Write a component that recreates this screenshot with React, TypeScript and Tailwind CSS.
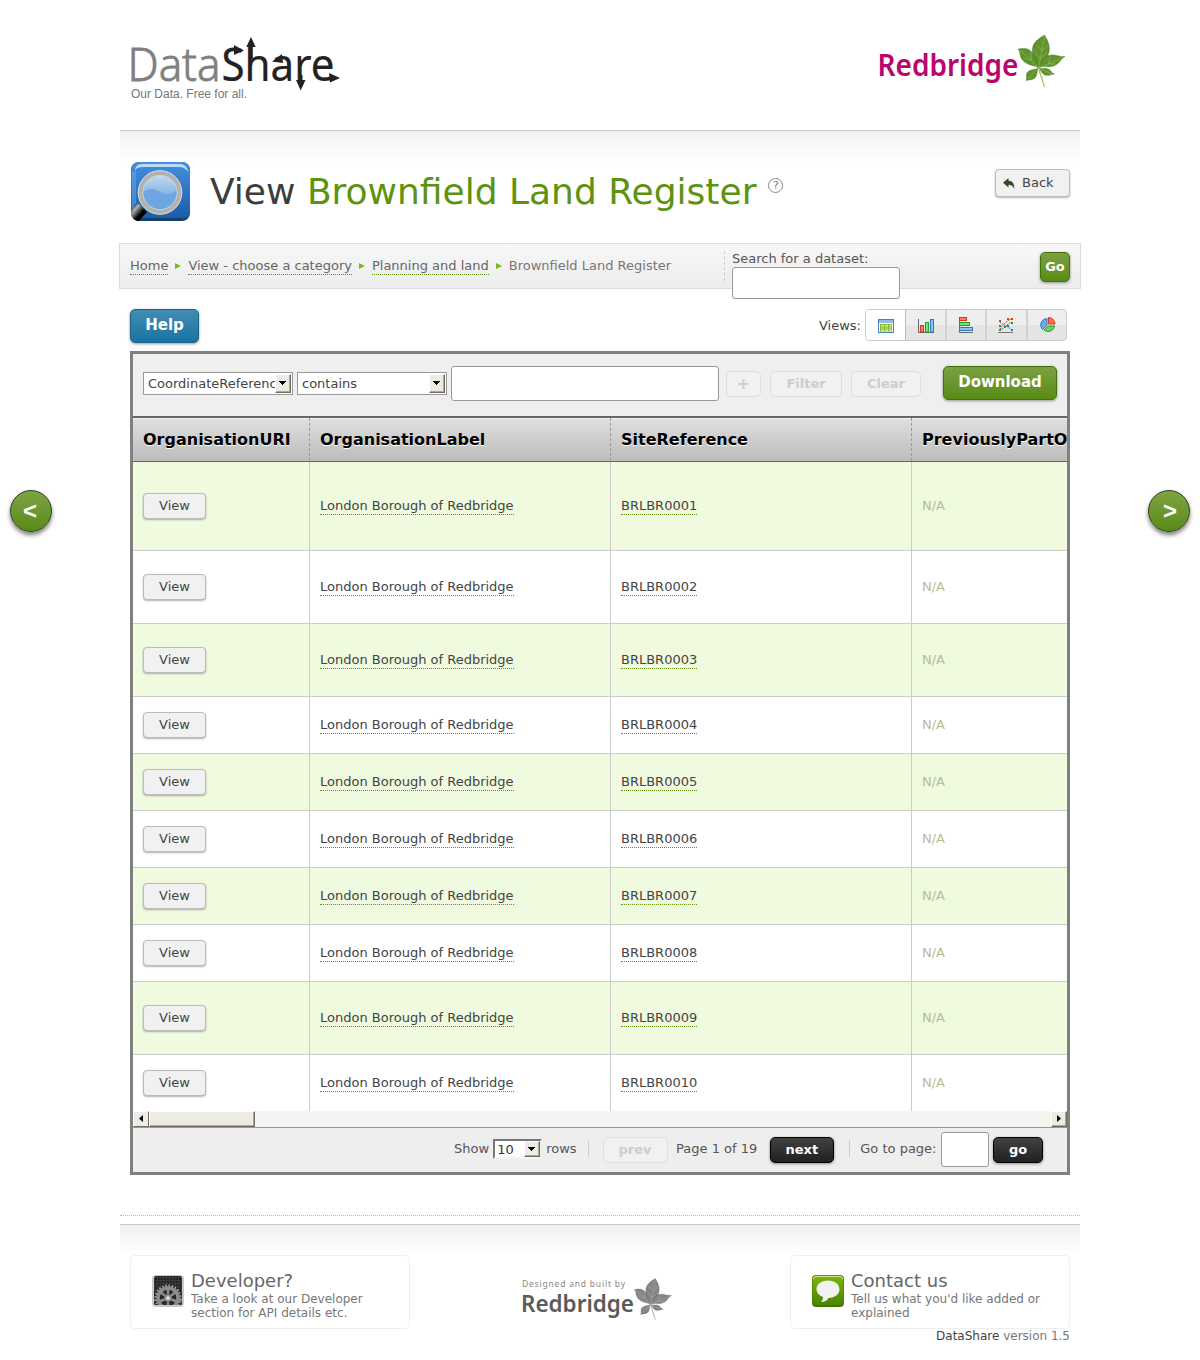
import React from "react";

const rows = [
  { ref: "BRLBR0001", h: "h-[89px]" },
  { ref: "BRLBR0002", h: "h-[73px]" },
  { ref: "BRLBR0003", h: "h-[73px]" },
  { ref: "BRLBR0004", h: "h-[57px]" },
  { ref: "BRLBR0005", h: "h-[57px]" },
  { ref: "BRLBR0006", h: "h-[57px]" },
  { ref: "BRLBR0007", h: "h-[57px]" },
  { ref: "BRLBR0008", h: "h-[57px]" },
  { ref: "BRLBR0009", h: "h-[73px]" },
  { ref: "BRLBR0010", h: "h-[57px]" },
];

const link = "mt-px border-b border-dotted border-[#5c9310] pb-px leading-[15px]";

function DataShareLogo() {
  return (
    <svg width="220" height="72" viewBox="-4 0 220 72" className="-ml-1 block overflow-visible">
      <g fontFamily="'Noto Sans', sans-serif" fontSize="45">
        <text x="-2.500" y="46" textLength="93" lengthAdjust="spacingAndGlyphs" fill="#808080" fontWeight="300" stroke="#808080" strokeWidth="0.8">Data</text>
        <text x="91.500" y="46" textLength="113" lengthAdjust="spacingAndGlyphs" fill="#222" fontWeight="400" stroke="#222" strokeWidth="0.2">Share</text>
      </g>
      <g fill="#222">
        <path d="M121 2 L125.7 12 H116.3 Z" />
        <path d="M119.2 10 H122.8 V24 H119.2 Z" />
        <path d="M104 10 L114 15.5 L104 20 Z" />
        <path d="M142 26.5 L152 19 L153 28 Z" />
        <path d="M169 40 H172.5 V48 H169 Z M166 45 H175.5 L170.7 55.5 Z" />
        <path d="M199 38 L210 43 L200 47.5 Z" />
      </g>
      <text x="1" y="63" fontFamily="'Liberation Sans', sans-serif" fontSize="12" textLength="116" fill="#777">Our Data. Free for all.</text>
    </svg>
  );
}

function Leaf({ a, b, c }: { a: string; b: string; c: string }) {
  return (
    <g>
      <g fill={a} stroke={b} strokeWidth="0.4">
        <path d="M21 33 C19 28 13 20 15.500 11 C17.500 6 22 3 27 0 C29 4 33 9 31.500 17 C29.500 25 23 27 21 33Z" />
        <path d="M21 33 C18 30 10 31 5 25 C1.500 21 3.500 17 0.500 14 C6 13 12 12.500 15.500 19 C18 24 18 29 21 33Z" />
        <path d="M21 33 C24 29 25 23 31 20.500 C37 18.500 41 22 47.500 21.500 C43 24 42 29 36 31 C30 33 26 30 21 33Z" />
        <path d="M21 33 C18 35 12 34 9.500 38 C8 41 10 42 8.500 45.500 C12 44.500 16 45.500 18.500 41.500 C20 38.500 19 36 21 33Z" />
        <path d="M21 33 C25 34.500 28 32.500 31.500 34.500 C34 36 34 38 37 39 C33 39.500 30 41.500 26.500 39.500 C23.500 37.500 23.500 35 21 33Z" />
      </g>
      <path d="M21 33 Q24 16 27 1 M21 33 Q12 22 2 15 M21 33 Q34 28 46 22 M21 33 L10 44 M21 33 L35 39 M23 24 L17.500 17 M23 24 L29.500 17 M25 16 L19 10 M25 16 L31 10 M14 25 L13 17 M14 25 L6 23 M31 29 L33 22 M31 29 L38 29" stroke={c} strokeWidth="0.500" fill="none" />
      <path d="M21 33 L27 52" stroke={c} strokeWidth="1.300" fill="none" />
    </g>
  );
}

function RedbridgeLogo() {
  return (
    <svg width="190" height="58" viewBox="0 0 190 58" className="block overflow-visible">
      <text x="1.500" y="41" fontFamily="'Noto Sans', sans-serif" fontWeight="600" fontSize="30" textLength="141" lengthAdjust="spacingAndGlyphs" fill="#b8066c">Redbridge</text>
      <g transform="translate(141.500 0)"><Leaf a="#5f942b" b="#35661c" c="#a9c56c" /></g>
    </svg>
  );
}

function FooterLogo() {
  return (
    <svg width="152" height="46" viewBox="0 0 152 46" className="block overflow-visible">
      <text x="0" y="10.500" fontFamily="'Noto Sans', sans-serif" fontSize="8.500" textLength="103" fill="#888">Designed and built by</text>
      <text x="-1" y="35.500" fontFamily="'Noto Sans', sans-serif" fontWeight="600" fontSize="24" textLength="113" lengthAdjust="spacingAndGlyphs" fill="#5b5b5b">Redbridge</text>
      <g transform="translate(112 2.500) scale(0.790)"><Leaf a="#858585" b="#555" c="#b5b5b5" /></g>
    </svg>
  );
}

function Magnifier() {
  return (
    <svg width="60" height="60" viewBox="0 0 60 60" className="block">
      <defs>
        <linearGradient id="mbg" x1="0" y1="0" x2="0" y2="1"><stop offset="0" stopColor="#4490e2" /><stop offset="1" stopColor="#1c5ca6" /></linearGradient>
        <linearGradient id="mlens" x1="0" y1="0" x2="0" y2="1"><stop offset="0" stopColor="#c4dcf4" /><stop offset="0.500" stopColor="#8db8e6" /><stop offset="1" stopColor="#8fbdf0" /></linearGradient>
        <linearGradient id="mhandle" x1="0" y1="0" x2="1" y2="1"><stop offset="0" stopColor="#222" /><stop offset="0.35" stopColor="#999" /><stop offset="0.6" stopColor="#000" /></linearGradient>
        <clipPath id="mclip"><rect x="1" width="59" height="59" rx="8" /></clipPath>
      </defs>
      <g clipPath="url(#mclip)">
        <rect x="1" width="59" height="59" fill="#14406f" />
        <rect x="1" width="59" height="56" rx="6" fill="url(#mbg)" />
        <path d="M5 9 Q5 2 12 2 H50 Q57 2 58 10 Q55 5 49 5 H13 Q6 5 5 9Z" fill="#bcd9f7" />
        <path d="M3 10 V46 M5 9 V42" stroke="#6aaaec" strokeWidth="1" />
        <path d="M8 41 L17 50 L8 60 H0 V49Z" fill="url(#mhandle)" />
        <path d="M9 43 L3 49" stroke="#aaa" strokeWidth="2" />
        <circle cx="30" cy="30.500" r="18" fill="url(#mlens)" />
        <path d="M13 30 C20 25 25 27 30 30 C36 33.500 41 33 47 28 A17 17 0 0 1 13 33Z" fill="#6ea6e2" />
        <circle cx="30" cy="30.500" r="19.500" fill="none" stroke="#b1b1b1" strokeWidth="5" />
        <circle cx="30" cy="30.500" r="21.800" fill="none" stroke="#ddd" strokeWidth="1" />
        <circle cx="30" cy="30.500" r="17.200" fill="none" stroke="#d5d5d5" strokeWidth="0.8" />
      </g>
    </svg>
  );
}

function DeveloperIcon() {
  return (
    <svg width="32" height="32" viewBox="0 0 32 32" className="block">
      <defs>
        <clipPath id="dclip"><rect x="2" y="1" width="28" height="29" rx="2" /></clipPath>
        <pattern id="ddots" width="3" height="3" patternUnits="userSpaceOnUse"><rect width="3" height="3" fill="#3a3a3a" /><circle cx="1" cy="1" r="0.9" fill="#181818" /></pattern>
      </defs>
      <rect width="32" height="32" rx="4" fill="#c9c9c9" />
      <g clipPath="url(#dclip)">
        <rect width="32" height="32" fill="url(#ddots)" />
        <rect y="17" width="32" height="15" fill="#252525" />
        <circle cx="16" cy="23" r="12.500" fill="none" stroke="#aaa" strokeWidth="2" strokeDasharray="1.600 1.673" />
        <circle cx="16" cy="23" r="10" fill="none" stroke="#8d8d8d" strokeWidth="3.500" />
        <path d="M16 23 V12 M16 23 L25 16 M16 23 L7 16 M16 23 L6 27 M16 23 L26 27 M16 23 V32" stroke="#8d8d8d" strokeWidth="2.500" />
        <circle cx="16" cy="23" r="3.500" fill="#aaa" stroke="#666" />
        <circle cx="16" cy="23" r="1.300" fill="#eee" />
        <circle cx="4" cy="29" r="4" fill="none" stroke="#888" strokeWidth="2" />
        <circle cx="28" cy="29" r="4" fill="none" stroke="#888" strokeWidth="2" />
      </g>
    </svg>
  );
}

function ContactIcon() {
  return (
    <svg width="32" height="32" viewBox="0 0 32 32" className="block">
      <defs><linearGradient id="cg" x1="0" y1="0" x2="0" y2="1"><stop offset="0" stopColor="#7fb50a" /><stop offset="1" stopColor="#4c8500" /></linearGradient></defs>
      <rect width="32" height="32" rx="4" fill="#437500" />
      <rect x="0.500" y="0.500" width="31" height="29.500" rx="3.500" fill="url(#cg)" />
      <path d="M1.500 4 Q1.500 1.500 4 1.500 H28 Q30.500 1.500 30.500 4" stroke="#d0e88f" fill="none" />
      <path d="M16 5.500 C22.500 5.500 27.500 9.300 27.500 14.300 C27.500 19.500 22.500 23 16.500 23 C15 25.500 12.500 27 9 27 C10.500 25.500 11 24 11 22 C7 20.500 4.500 17.500 4.500 14 C4.500 9.300 9.500 5.500 16 5.500Z" fill="#f2f2f2" />
    </svg>
  );
}

const TableIcon = () => (
  <svg width="16" height="16" viewBox="0 0 16 16">
    <rect x="0.500" y="1.500" width="15" height="13" fill="#fff" stroke="#4784bd" />
    <rect x="1" y="2" width="14" height="3" fill="#8fbbea" />
    <rect x="2" y="6" width="12" height="7.500" fill="#87b82c" />
    <path fill="#d6ec8f" d="M3 7h3v1.500H3zM7 7h3v1.500H7zM11 7h2.500v1.500H11zM3 9.500h3v1H3zM7 9.500h3v1H7zM11 9.500h2.500v1H11zM3 11.500h3v1.500H3zM7 11.500h3v1.500H7zM11 11.500h2.500v1.500H11z" />
  </svg>
);
const ColumnIcon = () => (
  <svg width="16" height="16" viewBox="0 0 16 16">
    <path d="M0.500 1V14.500H16" stroke="#666" fill="none" />
    <rect x="2.500" y="7.500" width="3" height="6.500" fill="#ff7d66" stroke="#dc3414" />
    <rect x="7.500" y="4.500" width="3" height="9.500" fill="#7be07b" stroke="#1c9e2c" />
    <rect x="12.500" y="1.500" width="3" height="12.500" fill="#93c2f2" stroke="#2e77bf" />
  </svg>
);
const BarIcon = () => (
  <svg width="16" height="16" viewBox="0 0 16 16">
    <path d="M1.500 0V15.500H15" stroke="#666" fill="none" />
    <rect x="1.500" y="0.500" width="7" height="3" fill="#ff7d66" stroke="#dc3414" />
    <rect x="1.500" y="5.500" width="10" height="3" fill="#7be07b" stroke="#1c9e2c" />
    <rect x="1.500" y="10.500" width="13" height="3" fill="#93c2f2" stroke="#2e77bf" />
  </svg>
);
const ScatterIcon = () => (
  <svg width="16" height="16" viewBox="0 0 16 16">
    <path d="M0 15.500H15" stroke="#777" />
    <g fill="none" strokeDasharray="1.500 0.700"><path d="M2 12L7 6L11 3L14 2" stroke="#dc3414" /><path d="M2 5L6 8L10 10L14 13" stroke="#2e77bf" /><path d="M2 13L6 11L10 7L14 5" stroke="#1c9e2c" /></g>
    <path d="M1 3h2v2H1zM9 1h2v2H9zM13 1h2v2h-2z" fill="#e23c1c" />
    <path d="M1 8h2v2H1zM6 9h2v2H6zM13 5h2v2h-2z" fill="#1c9e2c" />
    <path d="M1 12h2v2H1zM9 8h2v2H9zM13 12h2v2h-2z" fill="#2e77bf" />
  </svg>
);
const PieIcon = () => (
  <svg width="16" height="16" viewBox="0 0 16 16">
    <path d="M7 8V1.500A6.500 6.500 0 0 0 2.500 12.500Z" fill="#6aaee8" stroke="#2e77bf" />
    <path d="M8.500 7V0.500A6.500 6.500 0 0 1 15 7Z" fill="#ff7158" stroke="#dc3414" />
    <path d="M8 9H14.500A6.500 6.500 0 0 1 4 13Z" fill="#66d166" stroke="#1c9e2c" />
  </svg>
);

function SelectArrow({ className }: { className: string }) {
  return (
    <span className={"flex shrink-0 items-center justify-center border border-t-white border-l-white border-r-[#706c64] border-b-[#706c64] bg-[#eeebe5] pr-px pb-px shadow-[inset_-1px_-1px_0_#aaa69e] " + className}>
      <svg width="7" height="4" viewBox="0 0 7 4" shapeRendering="crispEdges"><path d="M0 0H7V1H6V2H5V3H4V4H3V3H2V2H1V1H0Z" /></svg>
    </span>
  );
}

const Crumb = () => <svg width="6" height="6" viewBox="0 0 6 6" className="mt-[6px] mr-[7px] ml-[7px]"><path d="M0 0L6 3L0 6Z" fill="#76bc21" /></svg>;

function RoundButton({ label, className }: { label: string; className: string }) {
  return (
    <button className={"absolute top-[490px] flex h-[42px] w-[42px] justify-center rounded-full border border-[#33401f] bg-linear-to-b from-[#7ea343] to-[#5a8b14] font-['Liberation_Sans',sans-serif] text-2xl leading-[40px] font-bold text-white shadow-[0_3px_4px_rgba(0,0,0,0.5)] " + className}>{label}</button>
  );
}

const disabled = "flex h-[26px] justify-center rounded-[5px] border border-[#dedede] bg-[#f1f1f1] font-bold leading-6 text-[#cdcdcd]";
const green = "justify-center border border-[#42700b] bg-linear-to-b from-[#7ba042] to-[#598c14] font-bold text-white shadow-[0_1px_3px_rgba(0,0,0,0.4)]";
const dark = "flex h-[26px] justify-center rounded-[5px] border border-black bg-linear-to-b from-[#424242] to-[#212121] font-bold leading-6 text-white shadow-[0_1px_3px_rgba(0,0,0,0.4)]";

export default function App() {
  return (
    <div className="relative h-[1360px] w-[1200px] overflow-hidden bg-white font-['DejaVu_Sans',sans-serif] text-[13px] leading-[18px] text-[#444]">
      <RoundButton label="<" className="left-[10px] pr-[2px]" />
      <RoundButton label=">" className="left-[1148px] pl-[2px]" />
      <div className="mx-auto w-[960px]">
        <header className="flex h-[130px] items-start justify-between pt-[35px] pr-[14px] pl-[10px]">
          <DataShareLogo />
          <RedbridgeLogo />
        </header>
        <div className="flex h-[113px] border-t border-[#c8c8c8] bg-[linear-gradient(#f2f2f2,#fff_30px)] px-[10px]">
          <div className="mt-[31px]"><Magnifier /></div>
          <h1 className="mt-[39px] ml-5 text-[36px] leading-[44px] whitespace-nowrap text-[#3d3d3d]">View <span className="text-[#5c9310]">Brownfield Land Register</span></h1>
          <span className="mt-[47px] ml-3 flex h-[15px] w-[15px] justify-center rounded-full border border-[#888] text-[11px] leading-[13px] text-[#777]">?</span>
          <button className="mt-[38px] ml-auto flex h-[28px] w-[75px] rounded-[4px] border border-[#bbb] bg-[#f1f1f1] pl-[7px] leading-[25px] shadow-[0_1px_2px_rgba(0,0,0,0.3)]">
            <svg width="12" height="11" viewBox="0 0 12 11" className="mt-[8px] mr-[7px]"><path d="M0 4.800L5.500 0V2.800C9.500 3 11.500 5.500 11.200 11C10 8 8.500 6.800 5.500 6.800V9.500Z" fill="#33491f" /></svg>
            Back
          </button>
        </div>
        <nav className="-mx-px flex h-[46px] border border-[#dcdcdc] bg-linear-to-b from-[#f8f8f8] to-[#ececec] pr-[10px] pl-[10px] text-[#666]">
          <div className="mt-[13px] flex h-[18px] w-[594px] items-start whitespace-nowrap">
            <a className={link}>Home</a><Crumb />
            <a className={link}>View - choose a category</a><Crumb />
            <a className={link}>Planning and land</a><Crumb />
            <span className="mt-px leading-[15px] text-[#777]">Brownfield Land Register</span>
          </div>
          <div className="mt-[7px] h-[30px] border-l border-dashed border-[#ccc]" />
          <div className="ml-[7px] pt-[6px] text-[#555]">
            <div className="leading-[17px]">Search for a dataset:</div>
            <div className="h-[32px] w-[168px] rounded-[3px] border border-[#999] bg-white" />
          </div>
          <button className={"mt-2 ml-auto flex h-[30px] w-[30px] rounded-[5px] leading-[28px] " + green}>Go</button>
        </nav>
        <div className="mt-5 flex h-[42px] items-start px-[10px]">
          <button className="flex h-[34px] w-[69px] justify-center rounded-[5px] border border-[#1b6387] bg-linear-to-b from-[#408db5] to-[#1873a2] text-[15px] leading-[30px] font-bold text-white shadow-[0_1px_3px_rgba(0,0,0,0.4)]">Help</button>
          <span className="mt-[8px] mr-[4px] ml-auto">Views:</span>
          <div className="mr-[3px] flex h-[32px] w-[202px] overflow-hidden rounded-[4px] border border-[#ccc] bg-linear-to-b from-[#eee] from-50% to-[#e5e5e5] to-50%">
            <span className="flex w-[40px] items-center justify-center border-r border-[#bbb] bg-white pt-px"><TableIcon /></span>
            <span className="flex w-[41px] items-center justify-center border-r-2 border-[#d2d2d2] pt-px"><ColumnIcon /></span>
            <span className="flex w-[40px] items-center justify-center border-r-2 border-[#d2d2d2]"><BarIcon /></span>
            <span className="flex w-[41px] items-center justify-center border-r-2 border-[#d2d2d2] pr-[1px]"><ScatterIcon /></span>
            <span className="flex flex-1 items-center justify-center pl-[2px]"><PieIcon /></span>
          </div>
        </div>
        <main className="mx-[10px] h-[824px] overflow-hidden border-[3px] border-[#808080] bg-[#eee]">
          <div className="flex h-[64px] items-start border-b-2 border-[#666] bg-[#efefef] pl-[10px]">
            <div className="mt-[18px] flex h-[23px] w-[150px] border border-[#999] bg-white p-px pl-1 leading-[20px]"><span className="min-w-0 flex-1 overflow-hidden">CoordinateReferenceSystem</span><SelectArrow className="h-[19px] w-[16px]" /></div>
            <div className="mt-[18px] ml-1 flex h-[23px] w-[150px] border border-[#999] bg-white p-px pl-1 leading-[20px]"><span className="flex-1">contains</span><SelectArrow className="h-[19px] w-[16px]" /></div>
            <div className="mt-[12px] ml-1 h-[35px] w-[268px] rounded-[3px] border border-[#999] bg-white" />
            <button className={"mt-[17px] ml-[7px] w-[35px] text-[16px] " + disabled}>+</button>
            <button className={"mt-[17px] ml-[9px] w-[72px] " + disabled}>Filter</button>
            <button className={"mt-[17px] ml-[9px] w-[70px] " + disabled}>Clear</button>
            <button className={"mt-[12px] ml-[22px] flex h-[34px] w-[114px] rounded-[5px] text-[15px] leading-[30px] " + green}>Download</button>
          </div>
          <div className="grid h-[44px] grid-cols-[177px_301px_301px_1fr] border-b border-[#666] bg-linear-to-b from-[#e0e0e0] to-[#bcbcbc] text-[16px] leading-[44px] font-bold text-black shadow-[inset_0_1px_0_#f4f4f4] [text-shadow:0_1px_0_#fff]">
            <div className="h-[43px] border-r border-dashed border-[#999] pl-[10px]">OrganisationURI</div>
            <div className="h-[43px] border-r border-dashed border-[#999] pl-[10px]">OrganisationLabel</div>
            <div className="h-[43px] border-r border-dashed border-[#999] pl-[10px]">SiteReference</div>
            <div className="h-[43px] overflow-hidden pl-[10px] whitespace-nowrap">PreviouslyPartOf</div>
          </div>
          <div className="h-[649px] overflow-hidden">
            {rows.map((r, i) => (
              <div key={r.ref} className={"grid grid-cols-[177px_301px_301px_1fr] border-b border-[#ccc] " + r.h + (i % 2 ? " bg-white" : " bg-[#effadf]")}>
                <div className="flex items-center border-r border-[#ccc] pl-[10px]">
                  <button className="flex h-[26px] w-[63px] justify-center rounded-[4px] border border-[#bbb] bg-[#f1f1f1] leading-[24px] text-[#444] shadow-[0_1px_2px_rgba(0,0,0,0.3)]">View</button>
                </div>
                <div className="flex items-center border-r border-[#ccc] pl-[10px]"><a className={link}>London Borough of Redbridge</a></div>
                <div className="flex items-center border-r border-[#ccc] pl-[10px]"><a className={link}>{r.ref}</a></div>
                <div className="flex items-center pl-[10px] leading-[16px] text-[#b3bf8f]">N/A</div>
              </div>
            ))}
          </div>
          <div className="flex h-[16px] bg-[#f6f4f0]">
            <span className="flex w-[16px] items-center justify-center border border-t-white border-l-white border-r-[#706c64] border-b-[#706c64] bg-[#eeebe5] pb-px"><svg width="4" height="7" viewBox="0 0 4 7"><path d="M4 0V7L0 3.500Z" /></svg></span>
            <span className="w-[106px] border border-t-white border-l-white border-r-[#706c64] border-b-[#706c64] bg-[#eeebe5] shadow-[inset_-1px_-1px_0_#aaa69e]" />
            <span className="ml-auto flex w-[16px] items-center justify-center border border-t-white border-l-white border-r-[#706c64] border-b-[#706c64] bg-[#eeebe5] pb-px shadow-[inset_-1px_-1px_0_#aaa69e]"><svg width="4" height="7" viewBox="0 0 4 7"><path d="M0 0V7L4 3.500Z" /></svg></span>
          </div>
          <div className="flex h-[45px] items-start border-t border-[#999] pr-[24px] whitespace-nowrap text-[#555]">
            <span className="mt-[12px] ml-auto">Show</span>
            <div className="mt-[11px] ml-[4px] flex h-[20px] w-[49px] border-2 border-t-[#777] border-r-[#eee] border-b-[#f6f4f0] border-l-[#777] bg-white pl-[2px] leading-[18px] text-[#333]"><span className="flex-1">10</span><SelectArrow className="h-[16px] w-[16px]" /></div>
            <span className="mt-[12px] ml-[4px]">rows</span>
            <span className="mt-[12px] ml-[11px] h-[17px] border-l border-[#ccc]" />
            <button className={"mt-[9px] ml-[14px] w-[65px] " + disabled}>prev</button>
            <span className="mt-[12px] ml-[8.500px]">Page 1 of 19</span>
            <button className={"mt-[9px] ml-[12.500px] w-[64px] " + dark}>next</button>
            <span className="mt-[12px] ml-[15px] h-[17px] border-l border-[#ccc]" />
            <span className="mt-[12px] ml-[10.500px]">Go to page:</span>
            <div className="mt-[4px] ml-[4.500px] h-[35px] w-[48px] rounded-[3px] border border-[#999] bg-white" />
            <button className={"mt-[9px] ml-[4px] w-[50px] " + dark}>go</button>
          </div>
        </main>
        <div className="mt-[40px] h-[9px] border-t border-dotted border-[#bbb]" />
        <footer className="h-[136px] border-t border-[#c8c8c8] bg-[linear-gradient(#f0f0f0,#fff_30px)] px-[10px] pt-[30px] text-[#777]">
          <div className="flex justify-between">
            <div className="flex h-[74px] w-[280px] rounded-[5px] border border-[#eee] bg-white pt-[19px] pl-[21px]">
              <DeveloperIcon />
              <div className="-mt-[6px] ml-[7px] text-[12px] leading-[14px]"><h2 className="text-[18px] leading-[23px] text-[#666]">Developer?</h2>Take a look at our Developer<br />section for API details etc.</div>
            </div>
            <div className="mt-[21px] mr-[4px]"><FooterLogo /></div>
            <div className="flex h-[74px] w-[280px] rounded-[5px] border border-[#eee] bg-white pt-[19px] pl-[21px]">
              <ContactIcon />
              <div className="-mt-[6px] ml-[7px] text-[12px] leading-[14px]"><h2 className="text-[18px] leading-[23px] text-[#666]">Contact us</h2>Tell us what you'd like added or<br />explained</div>
            </div>
          </div>
          <p className="text-right text-[12px] leading-[14px]"><span className="text-[#444]">DataShare</span> version 1.5</p>
        </footer>
      </div>
    </div>
  );
}
